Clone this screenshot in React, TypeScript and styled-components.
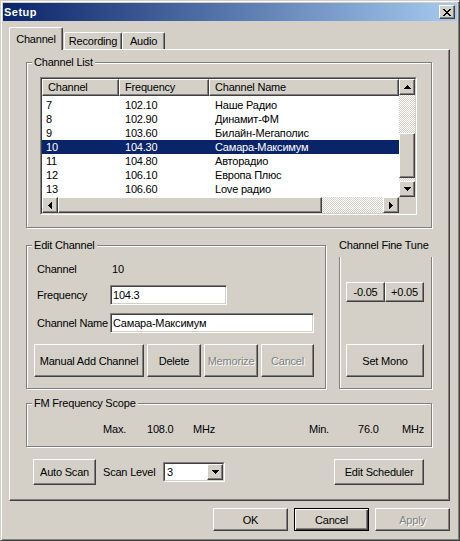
import React from "react";
import styled, { createGlobalStyle, css } from "styled-components";

const FACE = "#d4d0c8";
const FONT = `"Liberation Sans", Arial, sans-serif`;
const LS = "-0.2px";

const Global = createGlobalStyle`
  *, *::before, *::after { box-sizing: border-box; }
  html, body { margin: 0; padding: 0; background: ${FACE}; }
  body { font-family: ${FONT}; font-size: 11px; color: #000; letter-spacing: ${LS}; }
`;

const raised = css`
  border: 1px solid;
  border-color: #fff #404040 #404040 #fff;
  box-shadow: inset -1px -1px 0 #808080, inset 1px 1px 0 ${FACE};
  background: ${FACE};
`;

const Window = styled.div`
  width: 460px;
  height: 541px;
  border: 1px solid;
  border-color: ${FACE} #404040 #404040 ${FACE};
  box-shadow: inset 1px 1px 0 #fff, inset -1px -1px 0 #808080;
  padding: 2px;
  background: ${FACE};
  display: flex;
  flex-direction: column;
`;

const TitleBar = styled.div`
  height: 18px;
  flex: none;
  display: flex;
  align-items: center;
  padding: 0 2px 0 1px;
  background: linear-gradient(to right, #0a246a, #a6caf0);
`;

const TitleText = styled.span`
  color: #fff;
  font-weight: bold;
  font-size: 11px;
  letter-spacing: 0.5px;
`;

const CloseButton = styled.div`
  ${raised};
  margin-left: auto;
  width: 16px;
  height: 14px;
  display: flex;
  align-items: center;
  justify-content: center;
`;

const Body = styled.div`
  flex: 1;
  display: flex;
  flex-direction: column;
  padding: 6px 7px 7px 6px;
`;

const TabStrip = styled.div`
  display: flex;
  align-items: flex-end;
  height: 22px;
  flex: none;
`;

const Tab = styled.div<{ $active?: boolean; $w: number; $ml?: number }>`
  position: relative;
  width: ${(p) => p.$w}px;
  margin-left: ${(p) => p.$ml ?? 0}px;
  height: ${(p) => (p.$active ? 23 : 17)}px;
  margin-bottom: ${(p) => (p.$active ? -1 : 0)}px;
  z-index: ${(p) => (p.$active ? 2 : 1)};
  background: ${FACE};
  border-top: 1px solid #fff;
  border-left: 1px solid #fff;
  border-right: 1px solid #404040;
  border-radius: 2px 2px 0 0;
  box-shadow: inset -1px 0 0 #808080;
  display: flex;
  align-items: center;
  justify-content: center;
  line-height: 13px;
`;

const TabPanel = styled.div`
  height: 452px;
  flex: none;
  border: 1px solid;
  border-color: #fff #404040 #404040 #fff;
  box-shadow: inset -1px -1px 0 #808080;
  padding: 12px 17px 0 16px;
  display: flex;
  flex-direction: column;
`;

const GroupBox = styled.div<{ $w?: number; $h: number; $mt?: number; $pt?: number; $pl?: number }>`
  position: relative;
  flex: none;
  width: ${(p) => (p.$w ? `${p.$w}px` : "auto")};
  height: ${(p) => p.$h}px;
  margin-top: ${(p) => p.$mt ?? 0}px;
  padding-top: ${(p) => p.$pt ?? 0}px;
  padding-left: ${(p) => p.$pl ?? 0}px;
  border: 1px solid #808080;
  box-shadow: inset 1px 1px 0 #fff, 1px 1px 0 #fff;
`;

const GroupLabel = styled.span<{ $cover?: boolean }>`
  position: absolute;
  top: ${(p) => (p.$cover ? -9 : -8)}px;
  left: ${(p) => (p.$cover ? -2 : 5)}px;
  right: ${(p) => (p.$cover ? "-3px" : "auto")};
  height: ${(p) => (p.$cover ? 20 : 14)}px;
  padding: ${(p) => (p.$cover ? "1px 0 0 1px" : "0 2px")};
  background: ${FACE};
  line-height: 14px;
  white-space: nowrap;
  overflow: hidden;
`;

/* ---------- list view ---------- */
const ListFrame = styled.div`
  width: 377px;
  height: 138px;
  border: 1px solid;
  border-color: #808080 #fff #fff #808080;
`;

const ListInner = styled.div`
  width: 100%;
  height: 100%;
  border: 1px solid;
  border-color: #404040 ${FACE} ${FACE} #404040;
  background: #fff;
  display: grid;
  grid-template-columns: 1fr 16px;
  grid-template-rows: 1fr 16px;
`;

const ListMain = styled.div`
  overflow: hidden;
  display: flex;
  flex-direction: column;
`;

const ListHeader = styled.div`
  display: flex;
  height: 17px;
  flex: none;
`;

const HeaderCell = styled.div<{ $w?: number }>`
  ${(p) => (p.$w ? `width: ${p.$w}px; flex: none;` : "flex: 1;")}
  height: 17px;
  border: 1px solid;
  border-color: #fff #404040 #404040 #fff;
  box-shadow: inset -1px -1px 0 #808080;
  background: ${FACE};
  padding-left: 5px;
  line-height: 14px;
  white-space: nowrap;
`;

const ListRows = styled.div`
  padding-top: 2px;
`;

const Row = styled.div<{ $selected?: boolean }>`
  display: flex;
  height: 14px;
  line-height: 14px;
  background: ${(p) => (p.$selected ? "#0a246a" : "transparent")};
  color: ${(p) => (p.$selected ? "#fff" : "#000")};
  white-space: nowrap;
`;

const Cell = styled.div<{ $w?: number; $pl: number }>`
  ${(p) => (p.$w ? `width: ${p.$w}px; flex: none;` : "flex: 1;")}
  padding-left: ${(p) => p.$pl}px;
  overflow: hidden;
`;

const VScroll = styled.div`
  display: flex;
  flex-direction: column;
`;

const HScroll = styled.div`
  display: flex;
`;

const ScrollBtn = styled.div`
  ${raised};
  width: 16px;
  height: 16px;
  flex: none;
  display: flex;
  align-items: center;
  justify-content: center;
`;

const Track = styled.div`
  flex: 1;
  display: flex;
  background-color: #fff;
  background-image: conic-gradient(${FACE} 0 25%, #fff 0 50%, ${FACE} 0 75%, #fff 0);
  background-size: 2px 2px;
`;

const VTrack = styled(Track)`
  flex-direction: column;
`;

const Thumb = styled.div<{ $w?: number; $h?: number; $mt?: number }>`
  ${raised};
  flex: none;
  width: ${(p) => (p.$w ? `${p.$w}px` : "100%")};
  height: ${(p) => (p.$h ? `${p.$h}px` : "100%")};
  margin-top: ${(p) => p.$mt ?? 0}px;
`;

const Corner = styled.div`
  background: ${FACE};
`;

/* ---------- forms ---------- */
const SplitRow = styled.div`
  display: flex;
  gap: 13px;
  margin-top: 17px;
  flex: none;
`;

const FormRow = styled.div<{ $mt?: number }>`
  display: flex;
  align-items: center;
  height: 20px;
  padding-left: 3px;
  margin-top: ${(p) => p.$mt ?? 0}px;
`;

const FieldLabel = styled.span`
  width: 73px;
  flex: none;
  white-space: nowrap;
`;

const ValueText = styled.span`
  padding-left: 2px;
`;

const Field = styled.input<{ $w: number }>`
  width: ${(p) => p.$w}px;
  height: 20px;
  margin: 0;
  padding: 0 0 0 2px;
  font-family: ${FONT};
  font-size: 11px;
  letter-spacing: ${LS};
  color: #000;
  background: #fff;
  border: 1px solid;
  border-color: #808080 #fff #fff #808080;
  box-shadow: inset 1px 1px 0 #404040, inset -1px -1px 0 ${FACE};
  outline: none;
`;

const ButtonRow = styled.div<{ $mt?: number; $gap?: number }>`
  display: flex;
  gap: ${(p) => p.$gap ?? 0}px;
  margin-top: ${(p) => p.$mt ?? 0}px;
`;

const Button = styled.button<{ $w: number; $h: number; $def?: boolean }>`
  ${raised};
  width: ${(p) => p.$w}px;
  height: ${(p) => p.$h}px;
  flex: none;
  margin: 0;
  padding: 0;
  font-family: ${FONT};
  font-size: 11px;
  letter-spacing: ${LS};
  color: #000;
  white-space: nowrap;
  ${(p) =>
    p.$def &&
    css`
      border: 1px solid #000;
      box-shadow: inset 1px 1px 0 #fff, inset -1px -1px 0 #404040, inset -2px -2px 0 #808080;
    `}
  &:disabled {
    color: #808080;
    text-shadow: 1px 1px 0 #fff;
  }
`;

const ScopeRow = styled.div`
  display: grid;
  grid-template-columns: 76px 44px 46px 116px 49px 44px auto;
  height: 14px;
  line-height: 14px;
  margin-top: 18px;
  white-space: nowrap;
`;

const ControlsRow = styled.div`
  display: flex;
  align-items: center;
  height: 26px;
  margin-top: 12px;
  padding: 0 8px 0 7px;
  flex: none;
`;

const ScanLabel = styled.span`
  width: 60px;
  margin-left: 7px;
  flex: none;
  white-space: nowrap;
`;

const ComboFrame = styled.div`
  width: 62px;
  height: 20px;
  border: 1px solid;
  border-color: #808080 #fff #fff #808080;
`;

const ComboInner = styled.div`
  height: 100%;
  border: 1px solid;
  border-color: #404040 ${FACE} ${FACE} #404040;
  background: #fff;
  display: flex;
`;

const ComboValue = styled.span`
  flex: 1;
  padding-left: 2px;
  line-height: 16px;
`;

const Spacer = styled.div`
  flex: 1;
`;

const DialogButtons = styled.div`
  display: flex;
  justify-content: flex-end;
  gap: 6px;
  margin-top: 7px;
`;

/* ---------- icons ---------- */
const Pix = ({ w, h, d }: { w: number; h: number; d: string }) => (
  <svg width={w} height={h} viewBox={`0 0 ${w} ${h}`} shapeRendering="crispEdges" style={{ display: "block" }}>
    <path d={d} fill="#000" />
  </svg>
);

const CloseGlyph = () => (
  <Pix
    w={8}
    h={7}
    d="M0 0h2v1H0z M6 0h2v1H6z M1 1h2v1H1z M5 1h2v1H5z M2 2h4v1H2z M3 3h2v1H3z M2 4h4v1H2z M1 5h2v1H1z M5 5h2v1H5z M0 6h2v1H0z M6 6h2v1H6z"
  />
);
const UpArrow = () => <Pix w={7} h={4} d="M3 0h1v1H3z M2 1h3v1H2z M1 2h5v1H1z M0 3h7v1H0z" />;
const DownArrow = () => <Pix w={7} h={4} d="M0 0h7v1H0z M1 1h5v1H1z M2 2h3v1H2z M3 3h1v1H3z" />;
const LeftArrow = () => <Pix w={4} h={7} d="M0 3h1v1H0z M1 2h1v3H1z M2 1h1v5H2z M3 0h1v7H3z" />;
const RightArrow = () => <Pix w={4} h={7} d="M0 0h1v7H0z M1 1h1v5H1z M2 2h1v3H2z M3 3h1v1H3z" />;

const channels = [
  { n: "7", f: "102.10", name: "Наше Радио" },
  { n: "8", f: "102.90", name: "Динамит-ФМ" },
  { n: "9", f: "103.60", name: "Билайн-Мегаполис" },
  { n: "10", f: "104.30", name: "Самара-Максимум", sel: true },
  { n: "11", f: "104.80", name: "Авторадио" },
  { n: "12", f: "106.10", name: "Европа Плюс" },
  { n: "13", f: "106.60", name: "Love радио" },
  { n: "14", f: "107.90", name: "Хит FM" },
];

export default function App() {
  return (
    <>
      <Global />
      <Window>
        <TitleBar>
          <TitleText>Setup</TitleText>
          <CloseButton>
            <CloseGlyph />
          </CloseButton>
        </TitleBar>
        <Body>
          <TabStrip>
            <Tab $active $w={54}>Channel</Tab>
            <Tab $w={58} $ml={1}>Recording</Tab>
            <Tab $w={43}>Audio</Tab>
          </TabStrip>
          <TabPanel>
            <GroupBox $h={166} $pt={14} $pl={13}>
              <GroupLabel>Channel List</GroupLabel>
              <ListFrame>
                <ListInner>
                  <ListMain>
                    <ListHeader>
                      <HeaderCell $w={77}>Channel</HeaderCell>
                      <HeaderCell $w={90}>Frequency</HeaderCell>
                      <HeaderCell>Channel Name</HeaderCell>
                    </ListHeader>
                    <ListRows>
                      {channels.map((c) => (
                        <Row key={c.n} $selected={c.sel}>
                          <Cell $w={77} $pl={4}>{c.n}</Cell>
                          <Cell $w={90} $pl={6}>{c.f}</Cell>
                          <Cell $pl={6}>{c.name}</Cell>
                        </Row>
                      ))}
                    </ListRows>
                  </ListMain>
                  <VScroll>
                    <ScrollBtn>
                      <UpArrow />
                    </ScrollBtn>
                    <VTrack>
                      <Thumb $h={45} $mt={38} />
                    </VTrack>
                    <ScrollBtn>
                      <DownArrow />
                    </ScrollBtn>
                  </VScroll>
                  <HScroll>
                    <ScrollBtn>
                      <LeftArrow />
                    </ScrollBtn>
                    <Track>
                      <Thumb $w={264} />
                    </Track>
                    <ScrollBtn>
                      <RightArrow />
                    </ScrollBtn>
                  </HScroll>
                  <Corner />
                </ListInner>
              </ListFrame>
            </GroupBox>

            <SplitRow>
              <GroupBox $w={300} $h={144} $pt={13} $pl={7}>
                <GroupLabel>Edit Channel</GroupLabel>
                <FormRow>
                  <FieldLabel>Channel</FieldLabel>
                  <ValueText>10</ValueText>
                </FormRow>
                <FormRow $mt={6}>
                  <FieldLabel>Frequency</FieldLabel>
                  <Field $w={117} readOnly value="104.3" />
                </FormRow>
                <FormRow $mt={8}>
                  <FieldLabel>Channel Name</FieldLabel>
                  <Field $w={204} readOnly value="Самара-Максимум" />
                </FormRow>
                <ButtonRow $mt={11} $gap={3}>
                  <Button $w={110} $h={33}>Manual Add Channel</Button>
                  <Button $w={54} $h={33}>Delete</Button>
                  <Button $w={54} $h={33} disabled>Memorize</Button>
                  <Button $w={53} $h={33} disabled>Cancel</Button>
                </ButtonRow>
              </GroupBox>
              <GroupBox $w={93} $h={144} $pt={36} $pl={6}>
                <GroupLabel $cover>Channel Fine Tune</GroupLabel>
                <ButtonRow>
                  <Button $w={39} $h={20}>-0.05</Button>
                  <Button $w={39} $h={20}>+0.05</Button>
                </ButtonRow>
                <ButtonRow $mt={42}>
                  <Button $w={78} $h={33}>Set Mono</Button>
                </ButtonRow>
              </GroupBox>
            </SplitRow>

            <GroupBox $h={44} $mt={14}>
              <GroupLabel>FM Frequency Scope</GroupLabel>
              <ScopeRow>
                <span />
                <span>Max.</span>
                <span>108.0</span>
                <span>MHz</span>
                <span>Min.</span>
                <span>76.0</span>
                <span>MHz</span>
              </ScopeRow>
            </GroupBox>

            <ControlsRow>
              <Button $w={63} $h={26}>Auto Scan</Button>
              <ScanLabel>Scan Level</ScanLabel>
              <ComboFrame>
                <ComboInner>
                  <ComboValue>3</ComboValue>
                  <ScrollBtn>
                    <DownArrow />
                  </ScrollBtn>
                </ComboInner>
              </ComboFrame>
              <Spacer />
              <Button $w={90} $h={26}>Edit Scheduler</Button>
            </ControlsRow>
          </TabPanel>
          <DialogButtons>
            <Button $w={75} $h={23}>OK</Button>
            <Button $w={75} $h={23} $def>Cancel</Button>
            <Button $w={75} $h={23} disabled>Apply</Button>
          </DialogButtons>
        </Body>
      </Window>
    </>
  );
}
